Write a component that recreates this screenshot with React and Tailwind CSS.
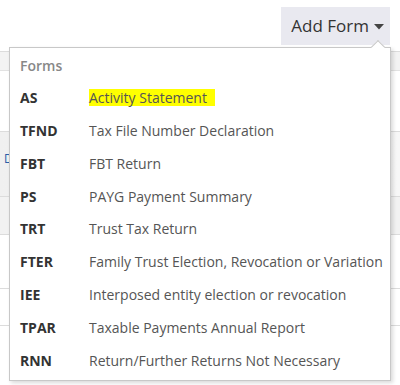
import { useState } from 'react';

const forms = [
  { code: 'AS', name: 'Activity Statement', highlight: true },
  { code: 'TFND', name: 'Tax File Number Declaration' },
  { code: 'FBT', name: 'FBT Return' },
  { code: 'PS', name: 'PAYG Payment Summary' },
  { code: 'TRT', name: 'Trust Tax Return' },
  { code: 'FTER', name: 'Family Trust Election, Revocation or Variation' },
  { code: 'IEE', name: 'Interposed entity election or revocation' },
  { code: 'TPAR', name: 'Taxable Payments Annual Report' },
  { code: 'RNN', name: 'Return/Further Returns Not Necessary' },
];

export default function App() {
  const [open, setOpen] = useState(true);

  return (
    <div className="relative w-[400px] h-[385px] overflow-hidden bg-white font-['Open_Sans',sans-serif] text-[#333]">
      {/* Toolbar */}
      <div className="flex justify-end pt-[7px] pr-[10px] h-[51px]">
        <button
          onClick={() => setOpen(o => !o)}
          className="flex items-center gap-[5px] h-[38px] pl-[10px] pr-[6px] bg-[#e9e9f0] text-[17px] text-[#333]"
        >
          <span>Add Form</span>
          <svg width="10" height="6" viewBox="0 0 10 6" className="mt-[2px]">
            <path d="M0 0 L10 0 L5 5.5 Z" fill="#444" />
          </svg>
        </button>
      </div>

      {/* Table behind the menu */}
      <div className="border-t border-[#dcdcdc]">
        <div className="h-[19px] bg-[#f3f3f3] border-b border-[#e2e2e2]" />
        <div className="h-[61px] bg-white border-b border-[#dcdcdc]" />
        <div className="h-[65px] bg-gradient-to-r from-[#f0f0f0] to-[#f7f7f7] border-b border-[#dcdcdc] flex items-center pl-[4px]">
          <span className="text-[12px] text-[#2a5ea8] -mt-[10px]">D</span>
        </div>
        <div className="h-[38px] bg-[#f2f2f2] border-b border-[#dcdcdc]" />
        <div className="h-[54px] bg-white border-b border-[#dcdcdc]" />
        <div className="h-[37px] bg-white border-b border-[#dcdcdc]" />
        <div className="h-[60px] bg-white" />
      </div>

      {/* Dropdown menu */}
      {open && (
        <div className="absolute left-[9px] top-[47px] w-[382px] h-[334px] bg-white border border-[#c8c8c8] shadow-[2px_2px_4px_rgba(0,0,0,0.15)] pt-[2px] pb-[4px]">
          <div className="absolute -top-[6px] right-[7px] w-[10px] h-[10px] bg-white border-l border-t border-[#c8c8c8] rotate-45" />
          <div className="relative h-[31px] flex items-center px-[10px] text-[14px] font-semibold text-[#888]">
            Forms
          </div>
          {forms.map(f => (
            <div key={f.code} className="relative h-[32.875px] flex items-center px-[10px] text-[14px] whitespace-nowrap">
              <span className="w-[69px] shrink-0 font-bold text-[#333]">{f.code}</span>
              <span
                className={
                  f.highlight
                    ? 'bg-[#ffff00] pr-[8px] leading-[17px] text-[#555]'
                    : 'text-[#555]'
                }
              >
                {f.name}
              </span>
            </div>
          ))}
        </div>
      )}
    </div>
  );
}
